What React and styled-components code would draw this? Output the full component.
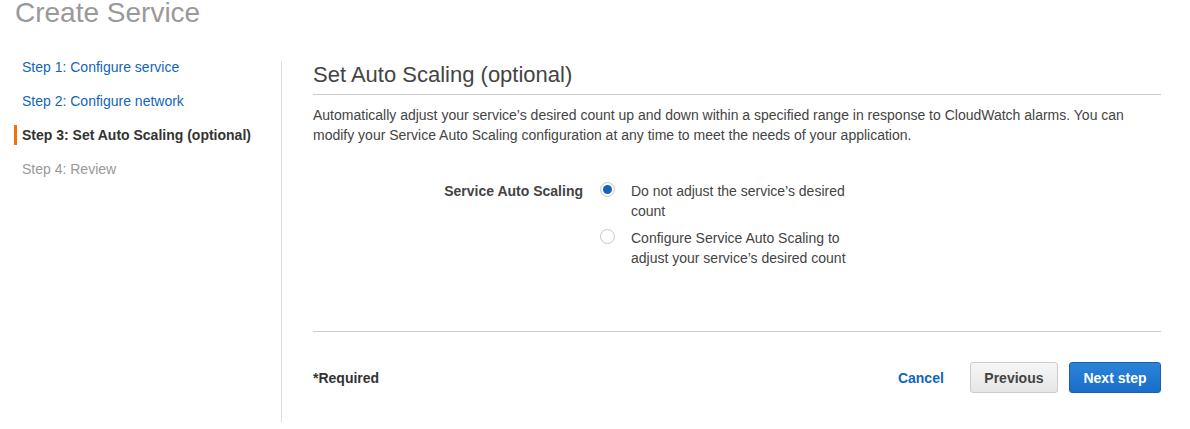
import React, { useState } from "react";
import styled, { createGlobalStyle } from "styled-components";

const GlobalStyle = createGlobalStyle`
  body {
    margin: 0;
    background: #ffffff;
    font-family: "Liberation Sans", Arial, sans-serif;
    font-size: 14px;
    color: #444;
  }
`;

const steps = [
  { label: "Step 1: Configure service", state: "done" },
  { label: "Step 2: Configure network", state: "done" },
  { label: "Step 3: Set Auto Scaling (optional)", state: "active" },
  { label: "Step 4: Review", state: "todo" },
];

const options = [
  { id: "none", label: "Do not adjust the service’s desired count" },
  { id: "configure", label: "Configure Service Auto Scaling to adjust your service’s desired count" },
];

function App() {
  const [choice, setChoice] = useState("none");

  return (
    <Page>
      <GlobalStyle />
      <Title>Create Service</Title>
      <Body>
        <Sidebar>
          {steps.map((s) => (
            <Step key={s.label} state={s.state}>
              {s.label}
            </Step>
          ))}
        </Sidebar>
        <Divider />
        <Main>
          <Heading>Set Auto Scaling (optional)</Heading>
          <Intro>
            Automatically adjust your service’s desired count up and down within a specified range in
            response to CloudWatch alarms. You can modify your Service Auto Scaling configuration at any
            time to meet the needs of your application.
          </Intro>
          <FormRow>
            <FieldLabel>Service Auto Scaling</FieldLabel>
            <Options>
              {options.map((o) => (
                <Option key={o.id} onClick={() => setChoice(o.id)}>
                  <Radio checked={choice === o.id} />
                  <OptionText>{o.label}</OptionText>
                </Option>
              ))}
            </Options>
          </FormRow>
          <Footer>
            <Required>*Required</Required>
            <Actions>
              <LinkButton>Cancel</LinkButton>
              <Button>Previous</Button>
              <Button primary>Next step</Button>
            </Actions>
          </Footer>
        </Main>
      </Body>
    </Page>
  );
}

const Page = styled.div`
  width: 1190px;
`;

const Title = styled.h1`
  margin: 0 0 0 15px;
  font-size: 28px;
  line-height: 26px;
  font-weight: normal;
  color: #999;
`;

const Body = styled.div`
  display: flex;
  align-items: stretch;
  margin-top: 32px;
`;

const Sidebar = styled.nav`
  width: 281px;
  flex-shrink: 0;
  margin-top: -1px;
  padding-left: 14px;
  box-sizing: border-box;
  display: flex;
  flex-direction: column;
  gap: 14px;
`;

const Step = styled.div`
  line-height: 20px;
  font-size: 14px;
  padding-left: ${(p) => (p.state === "active" ? "5px" : "8px")};
  border-left: ${(p) => (p.state === "active" ? "3px solid #ec7211" : "none")};
  color: ${(p) => (p.state === "done" ? "#1166bb" : p.state === "active" ? "#333" : "#999")};
  font-weight: ${(p) => (p.state === "active" ? "bold" : "normal")};
`;

const Divider = styled.div`
  width: 1px;
  margin-top: 3px;
  background: #ddd;
`;

const Main = styled.main`
  flex: 1;
  padding: 0 29px 29px 31px;
`;

const Heading = styled.h2`
  margin: 4px 0 0;
  padding-bottom: 6px;
  font-size: 22px;
  line-height: 26px;
  font-weight: normal;
  color: #444;
  border-bottom: 1px solid #ccc;
`;

const Intro = styled.p`
  margin: 10px 0 0;
  line-height: 20px;
  color: #444;
`;

const FormRow = styled.div`
  display: flex;
  margin-top: 36px;
  padding-bottom: 63px;
  border-bottom: 1px solid #ccc;
`;

const FieldLabel = styled.div`
  width: 270px;
  text-align: right;
  font-weight: bold;
  color: #444;
  line-height: 20px;
  padding-right: 17px;
`;

const Options = styled.div`
  display: flex;
  flex-direction: column;
  gap: 7px;
`;

const Option = styled.label`
  display: flex;
  align-items: flex-start;
  gap: 16px;
  cursor: pointer;
`;

const Radio = styled.span`
  position: relative;
  width: 15px;
  height: 15px;
  margin-top: 1px;
  box-sizing: border-box;
  border: 1px solid #c8c8c8;
  border-radius: 50%;
  background: #fff;
  flex-shrink: 0;

  &::after {
    content: "";
    position: absolute;
    left: 2px;
    top: 2px;
    width: 9px;
    height: 9px;
    border-radius: 50%;
    background: #1166bb;
    display: ${(p) => (p.checked ? "block" : "none")};
  }
`;

const OptionText = styled.span`
  width: 232px;
  line-height: 20px;
  color: #444;
`;

const Footer = styled.div`
  display: flex;
  align-items: center;
  justify-content: space-between;
  padding-top: 30px;
`;

const Required = styled.span`
  font-weight: bold;
  color: #333;
`;

const Actions = styled.div`
  display: flex;
  align-items: center;
`;

const LinkButton = styled.a`
  font-weight: bold;
  color: #1166bb;
  margin-right: 26px;
  cursor: pointer;
`;

const Button = styled.button`
  height: 31px;
  padding: 0 13.5px;
  margin-left: ${(p) => (p.primary ? "11px" : "0")};
  font-family: "Liberation Sans", Arial, sans-serif;
  font-size: 14px;
  font-weight: bold;
  border-radius: 3px;
  cursor: pointer;
  color: ${(p) => (p.primary ? "#fff" : "#444")};
  border: 1px solid ${(p) => (p.primary ? "#1a5fae" : "#cccccc")};
  background: ${(p) =>
    p.primary
      ? "linear-gradient(#2b84d9, #1b6dc8)"
      : "linear-gradient(#f6f6f6, #e6e6e6)"};
`;

export default App;
